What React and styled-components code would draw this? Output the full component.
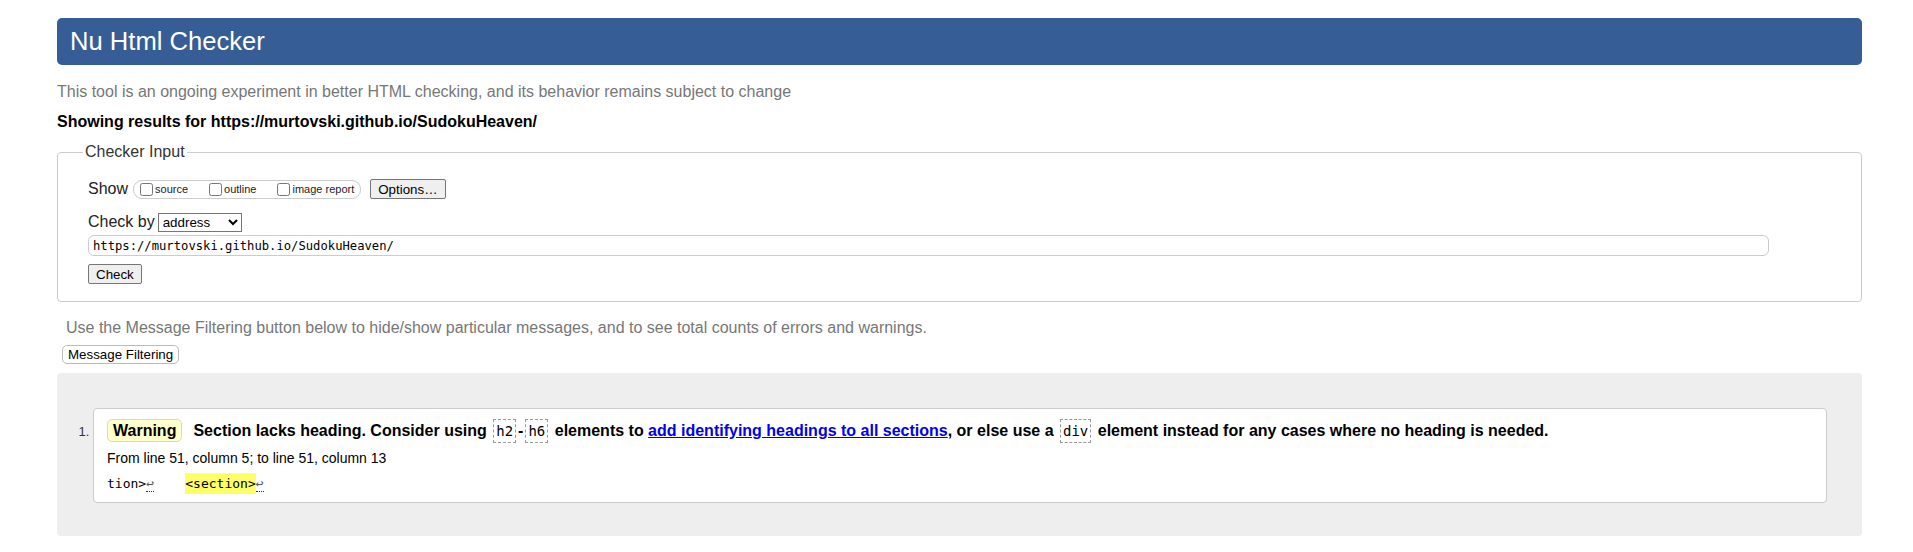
import styled, { createGlobalStyle } from "styled-components";

const GlobalStyle = createGlobalStyle`
  body {
    margin: 0;
    background: #fff;
    font-family: "Liberation Sans", Arial, sans-serif;
    color: #000;
  }
`;

const Page = styled.div`
  padding: 18px 51px 16px 57px;
`;

const Header = styled.h1`
  margin: 0;
  height: 47px;
  line-height: 47px;
  padding: 0 13px;
  background: #365d95;
  color: #fff;
  font-size: 25.6px;
  font-weight: normal;
  border-radius: 5px;
`;

const Intro = styled.p`
  margin: 18px 0 0;
  color: #777;
  font-size: 16px;
`;

const ResultsFor = styled.p`
  margin: 12px 0 0;
  font-size: 16px;
  font-weight: bold;
`;

//checker form
const Fieldset = styled.fieldset`
  margin: 12px 0 0;
  padding: 18px 30px 17px 30px;
  border: 1px solid #ccc;
  border-radius: 4px;
`;

const Legend = styled.legend`
  margin-left: -5px;
  padding: 0 2px;
  font-size: 16px;
  color: #333;
`;

const Row = styled.div`
  display: flex;
  align-items: center;
  height: 20px;
  margin-top: ${(p) => p.$gap || 0}px;
  font-size: 16px;
  color: #222;
`;

const ChoiceGroup = styled.span`
  display: inline-flex;
  align-items: center;
  gap: 21px;
  height: 17px;
  margin-left: 5px;
  padding: 0 6px 0 6px;
  border: 1px solid #ccc;
  border-radius: 9px;
`;

const Choice = styled.label`
  display: inline-flex;
  align-items: center;
  font-size: 11px;
  color: #222;
`;

const Box = styled.input`
  width: 13px;
  height: 13px;
  margin: 0 2px 0 0;
`;

const PlainButton = styled.button`
  height: 20px;
  padding: 0 7px;
  margin-left: ${(p) => p.$left || 0}px;
  font-family: "Liberation Sans", Arial, sans-serif;
  font-size: 13.33px;
  color: #000;
  background: #efefef;
  border: 1px solid #767676;
  border-radius: 2px;
`;

const Select = styled.select`
  height: 19px;
  width: 84px;
  margin-left: 3px;
  font-family: "Liberation Sans", Arial, sans-serif;
  font-size: 13.33px;
  color: #000;
  background: #fff;
  border: 1px solid #767676;
  border-radius: 0;
`;

const UrlInput = styled.input`
  display: block;
  box-sizing: border-box;
  width: calc(100% - 62px);
  height: 21px;
  margin-top: 3px;
  padding: 0 4px;
  font-family: "DejaVu Sans Mono", monospace;
  font-size: 12.2px;
  color: #000;
  border: 1px solid #ccc;
  border-radius: 6px;
`;

//messages
const FilterNote = styled.p`
  margin: 17px 0 0 9px;
  color: #777;
  font-size: 16px;
`;

const FilterButton = styled.button`
  display: block;
  height: 19px;
  margin: 8px 0 0 5px;
  padding: 0 5px;
  font-family: "Liberation Sans", Arial, sans-serif;
  font-size: 13.33px;
  color: #000;
  background: #fff;
  border: 1px solid #bbb;
  border-radius: 5px;
`;

const Results = styled.div`
  margin-top: 9px;
  padding: 35px 35px 33px 0;
  background: #eee;
  border-radius: 4px;
`;

const MessageList = styled.ol`
  margin: 0;
  padding-left: 36px;
`;

const Message = styled.li`
  padding: 10px 13px 11px 13px;
  background: #fff;
  border: 1px solid #ccc;
  border-radius: 4px;
  &::marker {
    font-size: 13px;
    color: #333;
  }
`;

const Summary = styled.p`
  margin: 0;
  line-height: 21px;
  font-size: 16px;
  font-weight: bold;
`;

const Badge = styled.span`
  display: inline-block;
  padding: 0 5px;
  margin-right: 11px;
  background: #ffc;
  border: 1px solid #dddda8;
  border-radius: 5px;
`;

const Code = styled.code`
  padding: 3px 2px;
  margin: 0 2px;
  font-family: "DejaVu Sans Mono", monospace;
  font-size: 14px;
  font-weight: normal;
  border: 1px dashed #999;
`;

const Link = styled.a`
  color: #00e;
  text-decoration: underline;
`;

const Location = styled.p`
  margin: 8px 0 0;
  font-size: 14px;
`;

const Extract = styled.p`
  margin: 10px 0 0;
  font-family: "DejaVu Sans Mono", monospace;
  font-size: 13px;
  white-space: pre;
`;

const Highlight = styled.b`
  font-weight: normal;
  background: #ff6;
  padding: 3px 0;
`;

const LineBreak = styled.span`
  color: #555;
  border-bottom: 1px dotted #333;
`;

export default function App() {
  return (
    <Page>
      <GlobalStyle />
      <Header>Nu Html Checker</Header>
      <Intro>
        This tool is an ongoing experiment in better HTML checking, and its
        behavior remains subject to change
      </Intro>
      <ResultsFor>
        Showing results for https://murtovski.github.io/SudokuHeaven/
      </ResultsFor>

      <Fieldset>
        <Legend>Checker Input</Legend>
        <Row>
          Show
          <ChoiceGroup>
            <Choice>
              <Box type="checkbox" />
              source
            </Choice>
            <Choice>
              <Box type="checkbox" />
              outline
            </Choice>
            <Choice>
              <Box type="checkbox" />
              image report
            </Choice>
          </ChoiceGroup>
          <PlainButton $left={9}>Options…</PlainButton>
        </Row>
        <Row $gap={13}>
          Check by
          <Select defaultValue="address">
            <option value="address">address</option>
            <option value="file">file upload</option>
            <option value="text">text input</option>
          </Select>
        </Row>
        <UrlInput
          type="url"
          defaultValue="https://murtovski.github.io/SudokuHeaven/"
        />
        <Row $gap={8}>
          <PlainButton>Check</PlainButton>
        </Row>
      </Fieldset>

      <FilterNote>
        Use the Message Filtering button below to hide/show particular
        messages, and to see total counts of errors and warnings.
      </FilterNote>
      <FilterButton>Message Filtering</FilterButton>

      <Results>
        <MessageList>
          <Message>
            <Summary>
              <Badge>Warning</Badge>
              {"Section lacks heading. Consider using "}
              <Code>h2</Code>-<Code>h6</Code>
              {" elements to "}
              <Link href="#">add identifying headings to all sections</Link>
              {", or else use a "}
              <Code>div</Code>
              {" element instead for any cases where no heading is needed."}
            </Summary>
            <Location>From line 51, column 5; to line 51, column 13</Location>
            <Extract>
              tion&gt;<LineBreak>↩</LineBreak>
              {"    "}
              <Highlight>&lt;section&gt;</Highlight>
              <LineBreak>↩</LineBreak>
            </Extract>
          </Message>
        </MessageList>
      </Results>
    </Page>
  );
}
